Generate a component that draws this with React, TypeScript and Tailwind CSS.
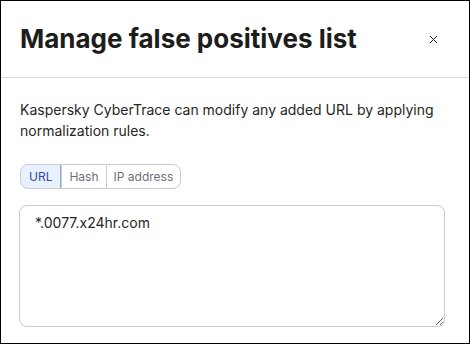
import { X } from "lucide-react";

const tabs = ["URL", "Hash", "IP address"];

export default function App() {
  return (
    <div className="w-[470px] h-[344px] border border-black bg-white overflow-hidden font-['Inter',sans-serif] text-[#1d1d1b]">
      <div className="h-[77px] border-b border-[#dadbdd] flex items-center justify-between pl-[19px] pr-[29px]">
        <h1 className="text-[26px] font-bold leading-none">Manage false positives list</h1>
        <X className="w-[13px] h-[13px]" strokeWidth={1.8} />
      </div>
      <div className="pl-[19px] pt-[21px]">
        <p className="text-[14px] leading-[21px] text-[#262626] pr-4">
          Kaspersky CyberTrace can modify any added URL by applying normalization rules.
        </p>
        <div className="mt-[23px] flex">
          <div className="flex h-[25px] rounded-[8px] border border-[#c9ccd1] text-[12px] overflow-hidden">
            {tabs.map((t, i) => (
              <div
                key={t}
                className={
                  i === 0
                    ? "px-[8px] flex items-center bg-[#e9f0fe] text-[#2c4aa8] border border-[#8aa8ee] rounded-l-[8px] -m-px mr-0"
                    : "px-[7px] flex items-center text-[#6c7079] border-l border-[#c9ccd1]"
                }
              >
                {t}
              </div>
            ))}
          </div>
        </div>
        <textarea
          defaultValue="*.0077.x24hr.com"
          className="mt-[16px] -ml-px block w-[426px] h-[122px] rounded-[8px] border border-[#c9ccd1] px-[15px] py-[6px] text-[14px] text-[#262626] outline-none"
        />
      </div>
    </div>
  );
}
